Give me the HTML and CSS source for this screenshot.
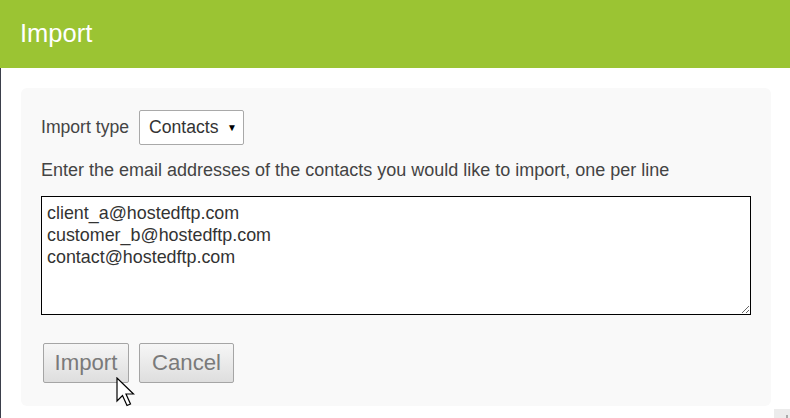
FILE: index.html
```html
<!DOCTYPE html>
<html lang="en">
<head>
<meta charset="utf-8">
<title>Import</title>
<link rel="stylesheet" href="styles.css">
</head>
<body>
<header class="topbar"><h1 class="title">Import</h1></header>
<main class="main">
  <section class="panel">
    <div class="type-row">
      <label class="type-label" for="type">Import type</label>
      <div class="select">
        <span class="select-value">Contacts</span>
        <span class="select-arrow">&#9660;</span>
      </div>
    </div>
    <p class="hint">Enter the email addresses of the contacts you would like to import, one per line</p>
    <textarea class="emails" spellcheck="false">client_a@hostedftp.com
customer_b@hostedftp.com
contact@hostedftp.com</textarea>
    <div class="actions">
      <button class="btn btn-import">Import</button>
      <button class="btn btn-cancel">Cancel</button>
    </div>
  </section>
  <svg class="cursor" width="20" height="31" viewBox="0 0 20 31" aria-hidden="true">
    <path d="M1 1 L1 24 L6.5 18.5 L11 28.5 L14.5 27 L10 17 L17.5 17 Z" fill="#fff" stroke="#000" stroke-width="1.2" stroke-linejoin="miter"/>
  </svg>
  <div class="corner"><span class="corner-mark"></span></div>
</main>
</body>
</html>
```
FILE: styles.css
```css
html, body {
  margin: 0;
  padding: 0;
  background: #ffffff;
  height: 100%;
}
body {
  font-family: "Liberation Sans", Arial, sans-serif;
  color: #444;
  overflow: hidden;
}
.topbar {
  height: 68px;
  background: #9bc433;
  display: flex;
  align-items: center;
  padding-left: 20px;
}
.title {
  margin: 0;
  font-weight: normal;
  font-size: 25.5px;
  color: #ffffff;
  position: relative;
  top: -1px;
}
.main {
  position: relative;
  border-left: 1px solid #3b3f4b;
  height: 350px;
  padding: 20px 0 0 20px;
  box-sizing: border-box;
}
.panel {
  width: 750px;
  height: 318px;
  box-sizing: border-box;
  background: #f9f9f9;
  border-radius: 6px;
  padding: 22px 20px 0 20px;
  display: flex;
  flex-direction: column;
}
.type-row {
  display: flex;
  align-items: center;
  gap: 10px;
  height: 35px;
}
.type-label {
  font-size: 17.6px;
  color: #444;
}
.select {
  width: 105px;
  height: 35px;
  box-sizing: border-box;
  border: 1px solid #a9a9a9;
  border-radius: 2px;
  background: #fff;
  display: flex;
  align-items: center;
  justify-content: space-between;
  padding: 0 6px 0 9px;
  color: #333;
}
.select-value {
  font-size: 17.6px;
}
.select-arrow {
  font-size: 10px;
  color: #000;
}
.hint {
  margin: 14px 0 15px 0;
  font-size: 18px;
  line-height: 22px;
  color: #444;
}
.emails {
  width: 710px;
  height: 119px;
  box-sizing: border-box;
  border: 1px solid #000;
  border-radius: 0;
  padding: 5px 5px;
  margin: 0;
  font-family: "Liberation Sans", Arial, sans-serif;
  font-size: 17.9px;
  line-height: 22px;
  color: #333;
  background: #fff;
  resize: both;
  outline: none;
}
.actions {
  display: flex;
  gap: 10px;
  margin-top: 28px;
  padding-left: 2px;
}
.btn {
  height: 40px;
  box-sizing: border-box;
  border: 1px solid #a5a5a5;
  border-radius: 2px;
  background: linear-gradient(#f6f6f6, #dedede);
  font-family: "Liberation Sans", Arial, sans-serif;
  font-size: 22.2px;
  color: #7a7a7a;
  padding: 0;
}
.btn-import { width: 86px; }
.btn-cancel { width: 95px; }
.cursor {
  position: absolute;
  left: 115px;
  top: 309px;
}
.corner {
  position: absolute;
  right: 0;
  top: 341px;
  width: 16px;
  height: 9px;
  background: #ececec;
}
.corner-mark {
  position: absolute;
  right: 2px;
  bottom: 0;
  width: 2px;
  height: 3px;
  background: #aaa;
}
```
